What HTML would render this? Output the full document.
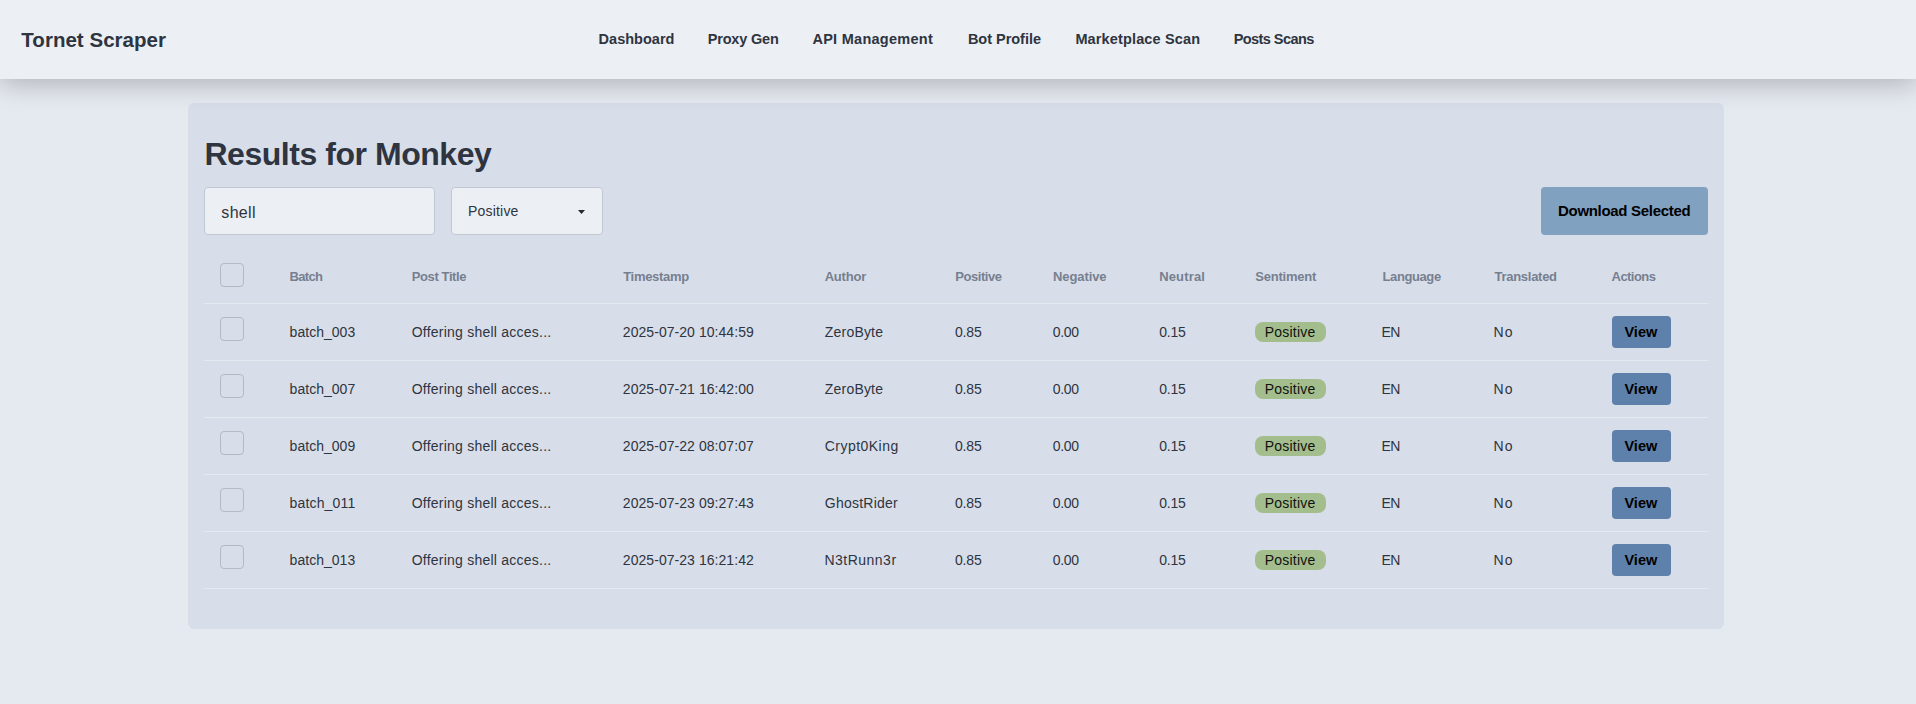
<!DOCTYPE html>
<html><head><meta charset="utf-8"><style>
html,body{margin:0;padding:0;}
body{width:1916px;height:704px;overflow:hidden;background:#e5e9f0;position:relative;font-family:"Liberation Sans",sans-serif;}
.t{position:absolute;white-space:pre;}
.nav{position:absolute;left:0;top:0;width:1916px;height:79px;background:#eceff4;box-shadow:0 4px 28px rgba(0,0,0,0.25);z-index:2;}
.card{position:absolute;left:188px;top:103px;width:1536px;height:526px;background:#d8dee9;border-radius:6px;}
.inp{position:absolute;box-sizing:border-box;background:#eceff4;border:1px solid #c2c8d2;border-radius:4px;}
.btn{position:absolute;}
.cb{position:absolute;box-sizing:border-box;width:24px;height:24px;border:1px solid #b4bac4;border-radius:4px;}
.ln{position:absolute;left:204px;width:1504px;height:1px;background:#e5e9f0;}
.badge{position:absolute;width:71px;height:20px;background:#a3be8c;border-radius:8px;}
.view{position:absolute;width:59px;height:32px;background:#5e81ac;border-radius:4px;}
</style></head><body>
<div class="nav"><div class="t" style="left:21.30px;top:29.55px;font-size:20.5px;line-height:20.5px;font-weight:bold;color:#2e3440;letter-spacing:0.029px">Tornet Scraper</div><div class="t" style="left:598.60px;top:31.73px;font-size:14.5px;line-height:14.5px;font-weight:bold;color:#2e3440;letter-spacing:0.015px">Dashboard</div><div class="t" style="left:707.70px;top:31.73px;font-size:14.5px;line-height:14.5px;font-weight:bold;color:#2e3440;letter-spacing:-0.184px">Proxy Gen</div><div class="t" style="left:812.40px;top:31.73px;font-size:14.5px;line-height:14.5px;font-weight:bold;color:#2e3440;letter-spacing:0.277px">API Management</div><div class="t" style="left:967.90px;top:31.73px;font-size:14.5px;line-height:14.5px;font-weight:bold;color:#2e3440;letter-spacing:-0.024px">Bot Profile</div><div class="t" style="left:1075.40px;top:31.73px;font-size:14.5px;line-height:14.5px;font-weight:bold;color:#2e3440;letter-spacing:0.143px">Marketplace Scan</div><div class="t" style="left:1233.70px;top:31.73px;font-size:14.5px;line-height:14.5px;font-weight:bold;color:#2e3440;letter-spacing:-0.567px">Posts Scans</div></div>
<div class="card"></div>
<div class="inp" style="left:204px;top:187px;width:231px;height:48px"></div><div class="inp" style="left:451px;top:187px;width:152px;height:48px"></div><svg class="t" style="left:577px;top:209px" width="9" height="6" viewBox="0 0 9 6"><path d="M1 1 L8 1 L4.5 5 Z" fill="#232833"/></svg><div class="btn" style="left:1541px;top:187px;width:167px;height:48px;background:#81a1c1;border-radius:4px"></div><div class="cb" style="left:220px;top:263px"></div><div class="ln" style="top:303px"></div><div class="cb" style="left:220px;top:317px"></div><div class="badge" style="left:1255px;top:322px"></div><div class="view" style="left:1612px;top:316px"></div><div class="ln" style="top:360px"></div><div class="cb" style="left:220px;top:374px"></div><div class="badge" style="left:1255px;top:379px"></div><div class="view" style="left:1612px;top:373px"></div><div class="ln" style="top:417px"></div><div class="cb" style="left:220px;top:431px"></div><div class="badge" style="left:1255px;top:436px"></div><div class="view" style="left:1612px;top:430px"></div><div class="ln" style="top:474px"></div><div class="cb" style="left:220px;top:488px"></div><div class="badge" style="left:1255px;top:493px"></div><div class="view" style="left:1612px;top:487px"></div><div class="ln" style="top:531px"></div><div class="cb" style="left:220px;top:545px"></div><div class="badge" style="left:1255px;top:550px"></div><div class="view" style="left:1612px;top:544px"></div><div class="ln" style="top:588px"></div>
<div class="t" style="left:204.40px;top:137.71px;font-size:32px;line-height:32px;font-weight:bold;color:#2e3440;letter-spacing:-0.457px">Results for Monkey</div><div class="t" style="left:221.30px;top:205.46px;font-size:16px;line-height:16px;font-weight:normal;color:#2e3440;letter-spacing:0.337px">shell</div><div class="t" style="left:467.90px;top:204.15px;font-size:14px;line-height:14px;font-weight:normal;color:#2e3440;letter-spacing:0.209px">Positive</div><div class="t" style="left:1558.00px;top:203.30px;font-size:15px;line-height:15px;font-weight:bold;color:#000;letter-spacing:-0.304px">Download Selected</div><div class="t" style="left:289.60px;top:270.10px;font-size:13px;line-height:13px;font-weight:bold;color:#767f90;letter-spacing:-0.694px">Batch</div><div class="t" style="left:411.70px;top:270.10px;font-size:13px;line-height:13px;font-weight:bold;color:#767f90;letter-spacing:-0.382px">Post Title</div><div class="t" style="left:623.20px;top:270.10px;font-size:13px;line-height:13px;font-weight:bold;color:#767f90;letter-spacing:-0.307px">Timestamp</div><div class="t" style="left:824.70px;top:270.10px;font-size:13px;line-height:13px;font-weight:bold;color:#767f90;letter-spacing:-0.208px">Author</div><div class="t" style="left:955.20px;top:270.10px;font-size:13px;line-height:13px;font-weight:bold;color:#767f90;letter-spacing:-0.432px">Positive</div><div class="t" style="left:1053.00px;top:270.10px;font-size:13px;line-height:13px;font-weight:bold;color:#767f90;letter-spacing:-0.094px">Negative</div><div class="t" style="left:1159.20px;top:270.10px;font-size:13px;line-height:13px;font-weight:bold;color:#767f90;letter-spacing:0.154px">Neutral</div><div class="t" style="left:1255.20px;top:270.10px;font-size:13px;line-height:13px;font-weight:bold;color:#767f90;letter-spacing:-0.214px">Sentiment</div><div class="t" style="left:1382.50px;top:270.10px;font-size:13px;line-height:13px;font-weight:bold;color:#767f90;letter-spacing:-0.395px">Language</div><div class="t" style="left:1494.50px;top:270.10px;font-size:13px;line-height:13px;font-weight:bold;color:#767f90;letter-spacing:-0.276px">Translated</div><div class="t" style="left:1611.60px;top:270.10px;font-size:13px;line-height:13px;font-weight:bold;color:#767f90;letter-spacing:-0.557px">Actions</div><div class="t" style="left:289.60px;top:325.15px;font-size:14px;line-height:14px;font-weight:normal;color:#2e3440;letter-spacing:0.024px">batch_003</div><div class="t" style="left:411.70px;top:325.15px;font-size:14px;line-height:14px;font-weight:normal;color:#2e3440;letter-spacing:0.233px">Offering shell acces...</div><div class="t" style="left:622.80px;top:325.15px;font-size:14px;line-height:14px;font-weight:normal;color:#2e3440;letter-spacing:0.055px">2025-07-20 10:44:59</div><div class="t" style="left:824.80px;top:325.15px;font-size:14px;line-height:14px;font-weight:normal;color:#2e3440;letter-spacing:0.198px">ZeroByte</div><div class="t" style="left:954.90px;top:325.15px;font-size:14px;line-height:14px;font-weight:normal;color:#2e3440;letter-spacing:-0.121px">0.85</div><div class="t" style="left:1052.70px;top:325.15px;font-size:14px;line-height:14px;font-weight:normal;color:#2e3440;letter-spacing:-0.287px">0.00</div><div class="t" style="left:1159.20px;top:325.15px;font-size:14px;line-height:14px;font-weight:normal;color:#2e3440;letter-spacing:-0.187px">0.15</div><div class="t" style="left:1264.70px;top:325.15px;font-size:14px;line-height:14px;font-weight:normal;color:#111;letter-spacing:0.224px">Positive</div><div class="t" style="left:1381.50px;top:325.15px;font-size:14px;line-height:14px;font-weight:normal;color:#2e3440;letter-spacing:-0.538px">EN</div><div class="t" style="left:1493.50px;top:325.15px;font-size:14px;line-height:14px;font-weight:normal;color:#2e3440;letter-spacing:1.190px">No</div><div class="t" style="left:1624.40px;top:324.73px;font-size:14.5px;line-height:14.5px;font-weight:bold;color:#000;letter-spacing:0.033px">View</div><div class="t" style="left:289.60px;top:382.15px;font-size:14px;line-height:14px;font-weight:normal;color:#2e3440;letter-spacing:0.024px">batch_007</div><div class="t" style="left:411.70px;top:382.15px;font-size:14px;line-height:14px;font-weight:normal;color:#2e3440;letter-spacing:0.233px">Offering shell acces...</div><div class="t" style="left:622.80px;top:382.15px;font-size:14px;line-height:14px;font-weight:normal;color:#2e3440;letter-spacing:0.055px">2025-07-21 16:42:00</div><div class="t" style="left:824.80px;top:382.15px;font-size:14px;line-height:14px;font-weight:normal;color:#2e3440;letter-spacing:0.198px">ZeroByte</div><div class="t" style="left:954.90px;top:382.15px;font-size:14px;line-height:14px;font-weight:normal;color:#2e3440;letter-spacing:-0.121px">0.85</div><div class="t" style="left:1052.70px;top:382.15px;font-size:14px;line-height:14px;font-weight:normal;color:#2e3440;letter-spacing:-0.287px">0.00</div><div class="t" style="left:1159.20px;top:382.15px;font-size:14px;line-height:14px;font-weight:normal;color:#2e3440;letter-spacing:-0.187px">0.15</div><div class="t" style="left:1264.70px;top:382.15px;font-size:14px;line-height:14px;font-weight:normal;color:#111;letter-spacing:0.224px">Positive</div><div class="t" style="left:1381.50px;top:382.15px;font-size:14px;line-height:14px;font-weight:normal;color:#2e3440;letter-spacing:-0.538px">EN</div><div class="t" style="left:1493.50px;top:382.15px;font-size:14px;line-height:14px;font-weight:normal;color:#2e3440;letter-spacing:1.190px">No</div><div class="t" style="left:1624.40px;top:381.73px;font-size:14.5px;line-height:14.5px;font-weight:bold;color:#000;letter-spacing:0.033px">View</div><div class="t" style="left:289.60px;top:439.15px;font-size:14px;line-height:14px;font-weight:normal;color:#2e3440;letter-spacing:0.024px">batch_009</div><div class="t" style="left:411.70px;top:439.15px;font-size:14px;line-height:14px;font-weight:normal;color:#2e3440;letter-spacing:0.233px">Offering shell acces...</div><div class="t" style="left:622.80px;top:439.15px;font-size:14px;line-height:14px;font-weight:normal;color:#2e3440;letter-spacing:0.055px">2025-07-22 08:07:07</div><div class="t" style="left:824.80px;top:439.15px;font-size:14px;line-height:14px;font-weight:normal;color:#2e3440;letter-spacing:0.459px">Crypt0King</div><div class="t" style="left:954.90px;top:439.15px;font-size:14px;line-height:14px;font-weight:normal;color:#2e3440;letter-spacing:-0.121px">0.85</div><div class="t" style="left:1052.70px;top:439.15px;font-size:14px;line-height:14px;font-weight:normal;color:#2e3440;letter-spacing:-0.287px">0.00</div><div class="t" style="left:1159.20px;top:439.15px;font-size:14px;line-height:14px;font-weight:normal;color:#2e3440;letter-spacing:-0.187px">0.15</div><div class="t" style="left:1264.70px;top:439.15px;font-size:14px;line-height:14px;font-weight:normal;color:#111;letter-spacing:0.224px">Positive</div><div class="t" style="left:1381.50px;top:439.15px;font-size:14px;line-height:14px;font-weight:normal;color:#2e3440;letter-spacing:-0.538px">EN</div><div class="t" style="left:1493.50px;top:439.15px;font-size:14px;line-height:14px;font-weight:normal;color:#2e3440;letter-spacing:1.190px">No</div><div class="t" style="left:1624.40px;top:438.73px;font-size:14.5px;line-height:14.5px;font-weight:bold;color:#000;letter-spacing:0.033px">View</div><div class="t" style="left:289.60px;top:496.15px;font-size:14px;line-height:14px;font-weight:normal;color:#2e3440;letter-spacing:0.154px">batch_011</div><div class="t" style="left:411.70px;top:496.15px;font-size:14px;line-height:14px;font-weight:normal;color:#2e3440;letter-spacing:0.233px">Offering shell acces...</div><div class="t" style="left:622.80px;top:496.15px;font-size:14px;line-height:14px;font-weight:normal;color:#2e3440;letter-spacing:0.055px">2025-07-23 09:27:43</div><div class="t" style="left:824.80px;top:496.15px;font-size:14px;line-height:14px;font-weight:normal;color:#2e3440;letter-spacing:0.228px">GhostRider</div><div class="t" style="left:954.90px;top:496.15px;font-size:14px;line-height:14px;font-weight:normal;color:#2e3440;letter-spacing:-0.121px">0.85</div><div class="t" style="left:1052.70px;top:496.15px;font-size:14px;line-height:14px;font-weight:normal;color:#2e3440;letter-spacing:-0.287px">0.00</div><div class="t" style="left:1159.20px;top:496.15px;font-size:14px;line-height:14px;font-weight:normal;color:#2e3440;letter-spacing:-0.187px">0.15</div><div class="t" style="left:1264.70px;top:496.15px;font-size:14px;line-height:14px;font-weight:normal;color:#111;letter-spacing:0.224px">Positive</div><div class="t" style="left:1381.50px;top:496.15px;font-size:14px;line-height:14px;font-weight:normal;color:#2e3440;letter-spacing:-0.538px">EN</div><div class="t" style="left:1493.50px;top:496.15px;font-size:14px;line-height:14px;font-weight:normal;color:#2e3440;letter-spacing:1.190px">No</div><div class="t" style="left:1624.40px;top:495.73px;font-size:14.5px;line-height:14.5px;font-weight:bold;color:#000;letter-spacing:0.033px">View</div><div class="t" style="left:289.60px;top:553.15px;font-size:14px;line-height:14px;font-weight:normal;color:#2e3440;letter-spacing:0.024px">batch_013</div><div class="t" style="left:411.70px;top:553.15px;font-size:14px;line-height:14px;font-weight:normal;color:#2e3440;letter-spacing:0.233px">Offering shell acces...</div><div class="t" style="left:622.80px;top:553.15px;font-size:14px;line-height:14px;font-weight:normal;color:#2e3440;letter-spacing:0.055px">2025-07-23 16:21:42</div><div class="t" style="left:824.40px;top:553.15px;font-size:14px;line-height:14px;font-weight:normal;color:#2e3440;letter-spacing:0.495px">N3tRunn3r</div><div class="t" style="left:954.90px;top:553.15px;font-size:14px;line-height:14px;font-weight:normal;color:#2e3440;letter-spacing:-0.121px">0.85</div><div class="t" style="left:1052.70px;top:553.15px;font-size:14px;line-height:14px;font-weight:normal;color:#2e3440;letter-spacing:-0.287px">0.00</div><div class="t" style="left:1159.20px;top:553.15px;font-size:14px;line-height:14px;font-weight:normal;color:#2e3440;letter-spacing:-0.187px">0.15</div><div class="t" style="left:1264.70px;top:553.15px;font-size:14px;line-height:14px;font-weight:normal;color:#111;letter-spacing:0.224px">Positive</div><div class="t" style="left:1381.50px;top:553.15px;font-size:14px;line-height:14px;font-weight:normal;color:#2e3440;letter-spacing:-0.538px">EN</div><div class="t" style="left:1493.50px;top:553.15px;font-size:14px;line-height:14px;font-weight:normal;color:#2e3440;letter-spacing:1.190px">No</div><div class="t" style="left:1624.40px;top:552.73px;font-size:14.5px;line-height:14.5px;font-weight:bold;color:#000;letter-spacing:0.033px">View</div>
</body></html>
